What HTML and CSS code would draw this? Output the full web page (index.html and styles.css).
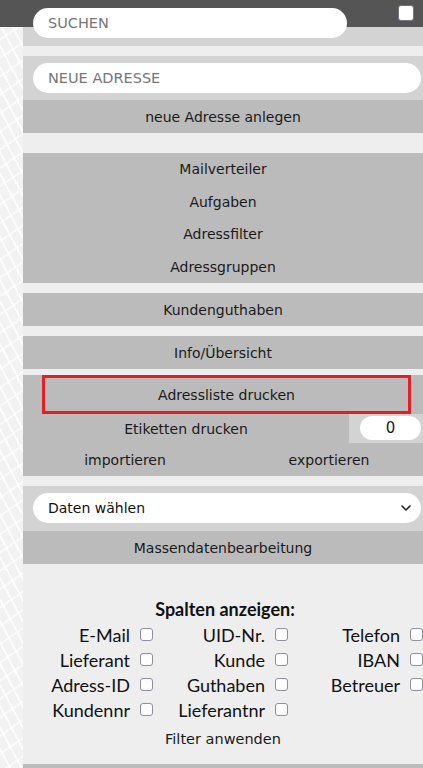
FILE: index.html
```html
<!DOCTYPE html>
<html lang="de">
<head>
<meta charset="utf-8">
<title>Adressen</title>
<link rel="stylesheet" href="styles.css">
</head>
<body>
<div class="panel">
  <div class="search-row">
    <input class="pill search" type="text" placeholder="SUCHEN">
    <span class="top-check"></span>
  </div>

  <div class="new-section">
    <input class="pill wide" type="text" placeholder="NEUE ADRESSE">
  </div>
  <div class="btn">neue Adresse anlegen</div>

  <div class="group gap20">
    <div class="item">Mailverteiler</div>
    <div class="item">Aufgaben</div>
    <div class="item">Adressfilter</div>
    <div class="item">Adressgruppen</div>
  </div>

  <div class="btn gap10">Kundenguthaben</div>
  <div class="btn gap10">Info/Übersicht</div>

  <div class="print-section">
    <div class="btn-red">Adressliste drucken</div>
    <div class="label-row">
      <div class="label-cell">Etiketten drucken</div>
      <div class="count-cell"><div class="count">0</div></div>
    </div>
    <div class="io-row">
      <div class="io-left">importieren</div>
      <div class="io-right">exportieren</div>
    </div>
  </div>

  <div class="select-section">
    <div class="select-wrap">
      <select class="pill-select">
        <option>Daten wählen</option>
      </select>
      <svg class="chev" width="10" height="6" viewBox="0 0 10 6"><path d="M1 1 L5 5 L9 1" fill="none" stroke="#222" stroke-width="1.6" stroke-linecap="round" stroke-linejoin="round"/></svg>
    </div>
  </div>
  <div class="btn">Massendatenbearbeitung</div>

  <div class="columns">
    <div class="col-title">Spalten anzeigen:</div>
    <div class="col-grid">
      <label class="cell">E-Mail <input type="checkbox"></label>
      <label class="cell">UID-Nr. <input type="checkbox"></label>
      <label class="cell">Telefon <input type="checkbox"></label>
      <label class="cell">Lieferant <input type="checkbox"></label>
      <label class="cell">Kunde <input type="checkbox"></label>
      <label class="cell">IBAN <input type="checkbox"></label>
      <label class="cell">Adress-ID <input type="checkbox"></label>
      <label class="cell">Guthaben <input type="checkbox"></label>
      <label class="cell">Betreuer <input type="checkbox"></label>
      <label class="cell">Kundennr <input type="checkbox"></label>
      <label class="cell">Lieferantnr <input type="checkbox"></label>
    </div>
    <div class="filter">Filter anwenden</div>
  </div>
  <div class="bottom-bar"></div>
</div>
</body>
</html>
```

FILE: styles.css
```css
html, body {
  margin: 0;
  padding: 0;
}
body {
  width: 423px;
  height: 768px;
  overflow: hidden;
  font-family: "DejaVu Sans", Verdana, sans-serif;
  font-size: 14px;
  color: #1a1a1a;
  background:
    linear-gradient(#555555 0, #555555 27px, transparent 27px),
    repeating-linear-gradient(62deg, transparent 0, transparent 8px, rgba(255,255,255,0.75) 8px, rgba(255,255,255,0.75) 10px),
    repeating-linear-gradient(-35deg, transparent 0, transparent 13px, rgba(255,255,255,0.6) 13px, rgba(255,255,255,0.6) 15px),
    #f2f2f2;
}
.panel {
  margin-left: 23px;
  background: #eeeeee;
  min-height: 768px;
}
.search-row {
  height: 46px;
  box-sizing: border-box;
  padding: 8px 9px 0 10px;
  display: flex;
  justify-content: space-between;
  align-items: flex-start;
  background: linear-gradient(#555555 0, #555555 27px, #d3d3d3 27px);
}
.pill {
  height: 30px;
  border: none;
  border-radius: 15px;
  background: #ffffff;
  box-sizing: border-box;
  padding: 0 15px;
  font-family: "DejaVu Sans", Verdana, sans-serif;
  font-size: 14.5px;
  color: #222;
  outline: none;
}
.pill::placeholder {
  color: #767676;
}
.search {
  width: 314px;
}
.top-check {
  width: 16px;
  height: 16px;
  box-sizing: border-box;
  margin-top: -3px;
  background: #fff;
  border: 1px solid #77728a;
  border-radius: 3px;
}
.new-section {
  margin-top: 10px;
  background: #d3d3d3;
  padding: 7px 2px 7px 10px;
}
.wide {
  width: 100%;
  display: block;
}
.btn {
  height: 33px;
  background: #bbbbbb;
  display: flex;
  align-items: center;
  justify-content: center;
}
.gap10 {
  margin-top: 10px;
}
.gap20 {
  margin-top: 20px;
}
.group {
  background: #bbbbbb;
}
.item {
  height: 32.5px;
  display: flex;
  align-items: center;
  justify-content: center;
}
.print-section {
  margin-top: 6px;
  background: #bbbbbb;
}
.btn-red {
  height: 39px;
  box-sizing: border-box;
  margin: 0 12px 0 19px;
  border: 3px solid #e31f23;
  display: flex;
  align-items: center;
  justify-content: center;
}
.label-row {
  display: flex;
  height: 29px;
}
.label-cell {
  flex: 1;
  display: flex;
  align-items: center;
  justify-content: center;
}
.count-cell {
  width: 74px;
  box-sizing: border-box;
  background: #d3d3d3;
  padding: 2px 2px 2px 11px;
}
.count {
  height: 24px;
  border-radius: 12px;
  background: #fff;
  display: flex;
  align-items: center;
  justify-content: center;
  font-size: 15px;
}
.io-row {
  height: 33px;
  display: grid;
  grid-template-columns: 204px 1fr;
  align-items: center;
}
.io-left {
  text-align: center;
}
.io-right {
  text-align: center;
  padding-left: 8px;
}
.select-section {
  margin-top: 10px;
  background: #d3d3d3;
  padding: 7px 2px 8px 10px;
}
.select-wrap {
  position: relative;
}
.pill-select {
  display: block;
  width: 100%;
  height: 30px;
  -webkit-appearance: none;
  appearance: none;
  border: none;
  border-radius: 15px;
  background: #fff;
  padding: 0 15px;
  font-family: "DejaVu Sans", Verdana, sans-serif;
  font-size: 14px;
  color: #111;
  outline: none;
}
.chev {
  position: absolute;
  right: 10px;
  top: 12px;
  pointer-events: none;
}
.columns {
  padding: 33px 0 12px 0;
  font-family: Lato, "Liberation Sans", sans-serif;
  font-size: 18px;
  color: #111;
}
.col-title {
  font-weight: 700;
  text-align: center;
  line-height: 25px;
  height: 25px;
  padding-left: 4px;
}
.col-grid {
  margin-left: -5px;
  display: grid;
  grid-template-columns: repeat(3, 135px);
  grid-auto-rows: 25px;
}
.cell {
  display: flex;
  justify-content: flex-end;
  align-items: center;
  gap: 10px;
  white-space: nowrap;
}
.cell input {
  -webkit-appearance: none;
  appearance: none;
  width: 13px;
  height: 13px;
  margin: 0;
  box-sizing: border-box;
  border: 1px solid #8f8f9d;
  border-radius: 3px;
  background: #fdfdfd;
  flex: none;
}
.filter {
  margin-top: 5px;
  height: 25px;
  line-height: 25px;
  text-align: center;
  font-family: "DejaVu Sans", Verdana, sans-serif;
  font-size: 14.5px;
  color: #1a1a1a;
}
.bottom-bar {
  height: 10px;
  background: #bbbbbb;
}
```
